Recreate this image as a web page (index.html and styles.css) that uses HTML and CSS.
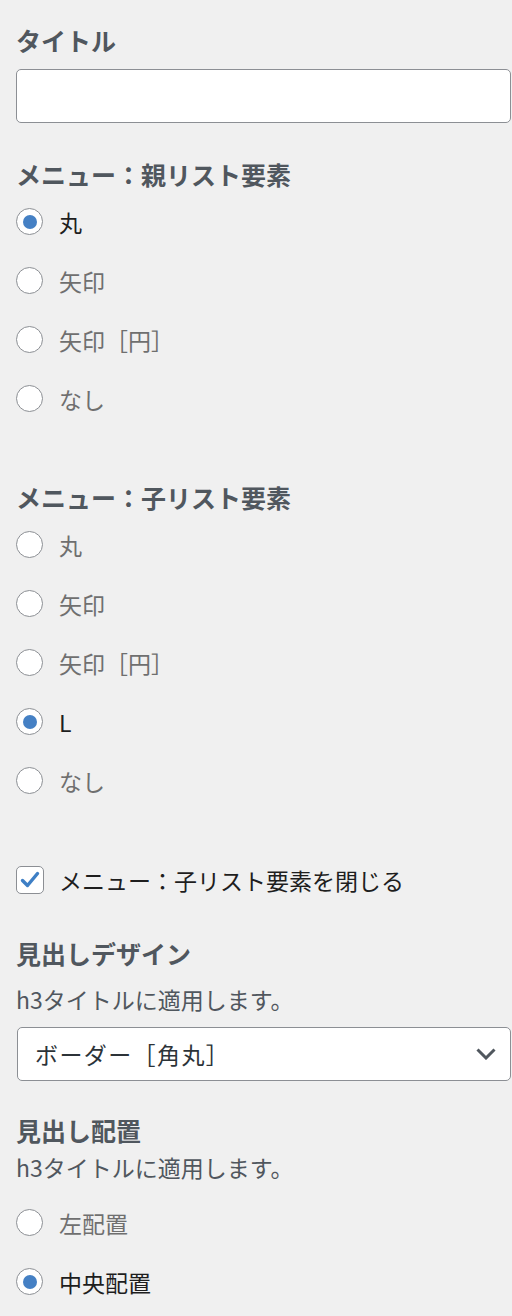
FILE: index.html
```html
<!DOCTYPE html>
<html lang="ja">
<head>
  <meta charset="UTF-8">
  <meta name="viewport" content="width=device-width, initial-scale=1.0">
  <title>カスタマイザー</title>
  <link rel="stylesheet" href="styles.css">
</head>
<body>

  <div class="panel">
    <div class="control control-title">
      <label class="control-heading" for="title">タイトル</label>
      <input type="text" id="title" class="text-input">
    </div>

    <div class="control control-parent">
      <div class="control-heading">メニュー：親リスト要素</div>
      <label class="radio-row checked"><span class="radio"></span>丸</label>
      <label class="radio-row"><span class="radio"></span>矢印</label>
      <label class="radio-row"><span class="radio"></span>矢印［円］</label>
      <label class="radio-row"><span class="radio"></span>なし</label>
    </div>

    <div class="control control-child">
      <div class="control-heading">メニュー：子リスト要素</div>
      <label class="radio-row"><span class="radio"></span>丸</label>
      <label class="radio-row"><span class="radio"></span>矢印</label>
      <label class="radio-row"><span class="radio"></span>矢印［円］</label>
      <label class="radio-row checked"><span class="radio"></span>L</label>
      <label class="radio-row"><span class="radio"></span>なし</label>
    </div>

    <div class="control control-check">
      <label class="check-row">
        <span class="checkbox">
          <svg width="22" height="22" viewBox="0 0 22 22"><path d="M3.5 11.5 L8.5 16.5 L18.5 4.5" fill="none" stroke="#3e7fc5" stroke-width="3.4" stroke-linecap="round" stroke-linejoin="round"/></svg>
        </span>
        メニュー：子リスト要素を閉じる
      </label>
    </div>

    <div class="control control-design">
      <div class="control-heading">見出しデザイン</div>
      <p class="description">h3タイトルに適用します。</p>
      <div class="select">
        <span class="select-value">ボーダー［角丸］</span>
        <svg width="20" height="12" viewBox="0 0 20 12"><path d="M1.5 1.5 L10 10 L18.5 1.5" fill="none" stroke="#50575e" stroke-width="3"/></svg>
      </div>
    </div>

    <div class="control control-align">
      <div class="control-heading">見出し配置</div>
      <p class="description">h3タイトルに適用します。</p>
      <label class="radio-row"><span class="radio"></span>左配置</label>
      <label class="radio-row checked"><span class="radio"></span>中央配置</label>
    </div>
  </div>

</body>
</html>
```

FILE: styles.css
```css
body {
  margin: 0;
  background-color: #f0f0f0;
  font-family: "Noto Sans CJK JP", "Noto Sans", sans-serif;
  color: #1e1e1e;
}
.panel {
  padding: 24px 1px 0 16px;
}
.control-heading {
  display: block;
  font-size: 25px;
  font-weight: bold;
  line-height: 32px;
  color: #50575e;
}
.text-input {
  display: block;
  box-sizing: border-box;
  width: 100%;
  height: 54px;
  margin-top: 13px;
  border: 1px solid #8c8f94;
  border-radius: 5px;
  background-color: #fff;
}
.control-parent {
  margin-top: 35px;
}
.control-child {
  margin-top: 53px;
}
.control-check {
  margin-top: 40px;
}
.control-design {
  margin-top: 28px;
}
.control-align {
  margin-top: 33px;
}
.control-parent .control-heading,
.control-child .control-heading {
  margin-bottom: 2px;
}
.radio-row,
.check-row {
  display: flex;
  align-items: center;
  gap: 16px;
  height: 59px;
  font-size: 23px;
  color: #6f6f6f;
}
.check-row {
  gap: 15px;
  color: #1e1e1e;
}
.radio-row.checked {
  color: #1e1e1e;
}
.radio {
  box-sizing: border-box;
  width: 27px;
  height: 27px;
  border: 1px solid #8c8f94;
  border-radius: 50%;
  background-color: #fff;
  display: flex;
  align-items: center;
  justify-content: center;
  flex-shrink: 0;
}
.radio-row.checked .radio::after {
  content: "";
  width: 14px;
  height: 14px;
  border-radius: 50%;
  background-color: #4580c4;
}
.checkbox {
  box-sizing: border-box;
  width: 28px;
  height: 28px;
  border: 1px solid #8c8f94;
  border-radius: 5px;
  background-color: #fff;
  display: flex;
  align-items: center;
  justify-content: center;
  flex-shrink: 0;
}
.description {
  margin: 0;
  font-size: 23px;
  line-height: 28px;
  color: #50575e;
}
.control-design .description {
  margin-top: 16px;
}
.control-align .description {
  margin-top: 7px;
  margin-bottom: 12px;
}
.select {
  box-sizing: border-box;
  height: 54px;
  margin: 14px 0 0 1px;
  padding: 0 14px 0 17px;
  display: flex;
  align-items: center;
  justify-content: space-between;
  border: 1px solid #8c8f94;
  border-radius: 5px;
  background-color: #fff;
  font-size: 23px;
  color: #2c3338;
}
.select-value {
  letter-spacing: 1.4px;
}
```
